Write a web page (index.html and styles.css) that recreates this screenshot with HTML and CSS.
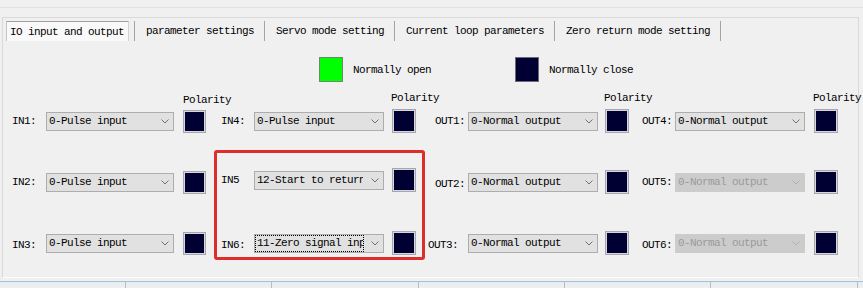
FILE: index.html
```html
<!DOCTYPE html>
<html>
<head>
<meta charset="utf-8">
<title>IO input and output</title>
<link rel="stylesheet" href="styles.css">
</head>
<body>
<div class="app">
  <div class="topline"></div>
  <div class="panel">
    <div class="tabs">
      <div class="tab tab-first"><span class="tab-current">IO input and output</span></div>
      <div class="tab">parameter settings</div>
      <div class="tab">Servo mode setting</div>
      <div class="tab">Current loop parameters</div>
      <div class="tab">Zero return mode setting</div>
    </div>

    <div class="legend">
      <span class="swatch swatch-open"></span><span class="legend-text">Normally open</span>
      <span class="swatch swatch-close legend-gap"></span><span class="legend-text">Normally close</span>
    </div>

    <div class="io-grid">
      <!-- polarity titles -->
      <div class="pol-title col1-b r0 pol-title-low">Polarity</div>
      <div class="pol-title col2-b r0">Polarity</div>
      <div class="pol-title col3-b r0">Polarity</div>
      <div class="pol-title col4-b r0">Polarity</div>

      <!-- row 1 -->
      <div class="lbl col1-l r1">IN1:</div>
      <div class="sel col1-s r1"><span class="sel-text">0-Pulse input</span><svg class="chev" viewBox="0 0 8 5" width="8" height="5"><polyline points="0.5,0.5 4,4 7.5,0.5"/></svg></div>
      <div class="pol pol-small col1-b r1"><span></span></div>

      <div class="lbl lbl-c2 col2-l r1">IN4:</div>
      <div class="sel col2-s r1"><span class="sel-text">0-Pulse input</span><svg class="chev" viewBox="0 0 8 5" width="8" height="5"><polyline points="0.5,0.5 4,4 7.5,0.5"/></svg></div>
      <div class="pol col2-b r1"><span></span></div>

      <div class="lbl lbl-c3 col3-l r1">OUT1:</div>
      <div class="sel col3-s r1"><span class="sel-text">0-Normal output</span><svg class="chev" viewBox="0 0 8 5" width="8" height="5"><polyline points="0.5,0.5 4,4 7.5,0.5"/></svg></div>
      <div class="pol col3-b r1"><span></span></div>

      <div class="lbl lbl-c4 col4-l r1">OUT4:</div>
      <div class="sel col4-s r1"><span class="sel-text">0-Normal output</span><svg class="chev" viewBox="0 0 8 5" width="8" height="5"><polyline points="0.5,0.5 4,4 7.5,0.5"/></svg></div>
      <div class="pol col4-b r1"><span></span></div>

      <!-- row 2 -->
      <div class="lbl col1-l r2">IN2:</div>
      <div class="sel col1-s r2"><span class="sel-text">0-Pulse input</span><svg class="chev" viewBox="0 0 8 5" width="8" height="5"><polyline points="0.5,0.5 4,4 7.5,0.5"/></svg></div>
      <div class="pol pol-small col1-b r2"><span></span></div>

      <div class="lbl lbl-c2 col2-l r2 up">IN5</div>
      <div class="sel col2-s r2 up"><span class="sel-text">12-Start to return</span><svg class="chev" viewBox="0 0 8 5" width="8" height="5"><polyline points="0.5,0.5 4,4 7.5,0.5"/></svg></div>
      <div class="pol col2-b r2 up"><span></span></div>

      <div class="lbl lbl-c3 col3-l r2 down">OUT2:</div>
      <div class="sel col3-s r2"><span class="sel-text">0-Normal output</span><svg class="chev" viewBox="0 0 8 5" width="8" height="5"><polyline points="0.5,0.5 4,4 7.5,0.5"/></svg></div>
      <div class="pol col3-b r2"><span></span></div>

      <div class="lbl lbl-c4 col4-l r2">OUT5:</div>
      <div class="sel sel-disabled col4-s r2"><span class="sel-text">0-Normal output</span><svg class="chev" viewBox="0 0 8 5" width="8" height="5"><polyline points="0.5,0.5 4,4 7.5,0.5"/></svg></div>
      <div class="pol col4-b r2"><span></span></div>

      <!-- row 3 -->
      <div class="lbl col1-l r3 down">IN3:</div>
      <div class="sel col1-s r3"><span class="sel-text">0-Pulse input</span><svg class="chev" viewBox="0 0 8 5" width="8" height="5"><polyline points="0.5,0.5 4,4 7.5,0.5"/></svg></div>
      <div class="pol pol-small col1-b r3"><span></span></div>

      <div class="lbl lbl-c2 col2-l r3 down">IN6:</div>
      <div class="sel col2-s r3"><span class="sel-text sel-focus">11-Zero signal input</span><svg class="chev" viewBox="0 0 8 5" width="8" height="5"><polyline points="0.5,0.5 4,4 7.5,0.5"/></svg></div>
      <div class="pol col2-b r3"><span></span></div>

      <div class="lbl lbl-c3b col3-l r3 down">OUT3:</div>
      <div class="sel col3-s r3"><span class="sel-text">0-Normal output</span><svg class="chev" viewBox="0 0 8 5" width="8" height="5"><polyline points="0.5,0.5 4,4 7.5,0.5"/></svg></div>
      <div class="pol col3-b r3"><span></span></div>

      <div class="lbl lbl-c4 col4-l r3 down">OUT6:</div>
      <div class="sel sel-disabled col4-s r3"><span class="sel-text">0-Normal output</span><svg class="chev" viewBox="0 0 8 5" width="8" height="5"><polyline points="0.5,0.5 4,4 7.5,0.5"/></svg></div>
      <div class="pol col4-b r3"><span></span></div>
    </div>
  </div>

  <div class="highlight"></div>

  <div class="statusbar">
    <div class="status-cell cell-a"></div>
    <div class="status-cell cell-b"></div>
    <div class="status-cell cell-c"></div>
    <div class="status-cell cell-b"></div>
    <div class="status-cell cell-b"></div>
    <div class="status-cell cell-c"></div>
    <div class="status-cell cell-rest"></div>
  </div>
</div>
</body>
</html>
```

FILE: styles.css
```css
html, body {
  margin: 0;
  padding: 0;
}

body {
  background: #f0f0f0;
  font-family: "Liberation Mono", "DejaVu Sans Mono", monospace;
  font-size: 11px;
  line-height: 12px;
  letter-spacing: -0.6px;
  color: #000;
}

.app {
  position: relative;
  width: 863px;
  height: 288px;
  overflow: hidden;
}

.topline {
  height: 7px;
  border-bottom: 1px solid #e0e0e0;
}

.panel {
  margin: 9px 4px 0 2px;
  height: 261px;
  box-sizing: border-box;
  border: 1px solid #d9d9d9;
  border-bottom-color: #ffffff;
}

/* tabs */
.tabs {
  display: flex;
  padding-top: 3px;
  height: 20px;
}

.tab {
  height: 20px;
  display: flex;
  align-items: center;
  padding: 0 10px 0 11px;
  border-right: 1px solid #a3a3a3;
  white-space: nowrap;
  box-sizing: border-box;
}

.tab-first {
  margin-left: 3px;
  padding: 0 5px 0 0;
}

.tab-current {
  box-sizing: border-box;
  width: 123px;
  height: 20px;
  padding-left: 3px;
  display: flex;
  align-items: center;
  background: #f9f9f9;
  border-top: 1px solid #a0a0a0;
  border-left: 1px solid #c4c4c4;
  border-right: 1px solid #d4d4d4;
}

/* legend */
.legend {
  display: flex;
  align-items: center;
  margin: 16px 0 0 316px;
  height: 25px;
}

.swatch {
  box-sizing: border-box;
  width: 24px;
  height: 25px;
  border: 1px solid #6e6e6e;
  margin-right: 10px;
}

.swatch-open {
  background: #00ff00;
  border-color: #6a8a6a;
}

.swatch-close {
  background: #000033;
  border-color: #6b6b78;
}

.legend-gap {
  margin-left: 84px;
}

.legend-text {
  white-space: nowrap;
}

/* IO grid */
.io-grid {
  display: grid;
  margin: 8px 0 0 9px;
  grid-template-columns: 34px 128px 32px 48px 130px 32px 52px 130px 31px 46px 130px 33px;
  grid-template-rows: 16px 30px 31px 30px 31px 30px;
  align-items: center;
}

.r0 { grid-row: 1; }
.r1 { grid-row: 2; }
.r2 { grid-row: 4; }
.r3 { grid-row: 6; }

.col1-l { grid-column: 1; }
.col1-s { grid-column: 2; }
.col1-b { grid-column: 3; }
.col2-l { grid-column: 4; }
.col2-s { grid-column: 5; }
.col2-b { grid-column: 6; }
.col3-l { grid-column: 7; }
.col3-s { grid-column: 8; }
.col3-b { grid-column: 9; }
.col4-l { grid-column: 10; }
.col4-s { grid-column: 11; }
.col4-b { grid-column: 12; }

.up { margin-top: -4px; }
.down { margin-top: 4px; }

.pol-title {
  justify-self: end;
  width: 24px;
  margin-right: 1px;
  white-space: nowrap;
}

.pol-title-low {
  align-self: end;
  width: 23px;
  margin-right: 0;
}

.lbl {
  white-space: nowrap;
}

.lbl-c2 { padding-left: 15px; }
.lbl-c3 { padding-left: 19px; }
.lbl-c3b { padding-left: 12px; }
.lbl-c4 { padding-left: 13px; }

.sel {
  box-sizing: border-box;
  height: 19px;
  display: flex;
  align-items: center;
  background: #e1e1e1;
  border: 1px solid #adadad;
}

.sel-text {
  box-sizing: border-box;
  width: 107px;
  height: 15px;
  margin-left: 1px;
  padding-left: 1px;
  display: flex;
  align-items: center;
  overflow: hidden;
  white-space: nowrap;
}

.sel-focus {
  outline: 1px dotted #000;
  outline-offset: 0;
}

.chev {
  margin-left: auto;
  margin-right: 4px;
  fill: none;
  stroke: #707070;
  stroke-width: 1;
}

.sel-disabled {
  background: #cccccc;
  border-color: #cccccc;
  color: #9a9a9a;
}

.sel-disabled .chev {
  stroke: #b0b0b0;
}

.pol {
  justify-self: end;
  box-sizing: border-box;
  width: 24px;
  height: 24px;
  padding: 1px;
  border: 1px solid #a6a6ae;
  background: #d8d8dc;
  display: flex;
}

.pol-small {
  width: 23px;
  height: 23px;
}

.pol span {
  flex: 1;
  background: #000033;
}

/* red highlight frame */
.highlight {
  position: absolute;
  left: 214px;
  top: 150px;
  width: 211px;
  height: 110px;
  box-sizing: border-box;
  border: 3px solid #dd2e2a;
  border-radius: 3px;
}

/* bottom strip */
.statusbar {
  margin-top: 3px;
  height: 7px;
  display: flex;
  border-top: 1px solid #a6c2d8;
  background: linear-gradient(#e6edf3, #f0f0f0);
}

.status-cell {
  height: 7px;
  border-right: 1px solid #bdbdbd;
}

.cell-a { width: 125px; }
.cell-b { width: 145px; }
.cell-c { width: 146px; }
.cell-rest { flex: 1; border-right: none; }
```
